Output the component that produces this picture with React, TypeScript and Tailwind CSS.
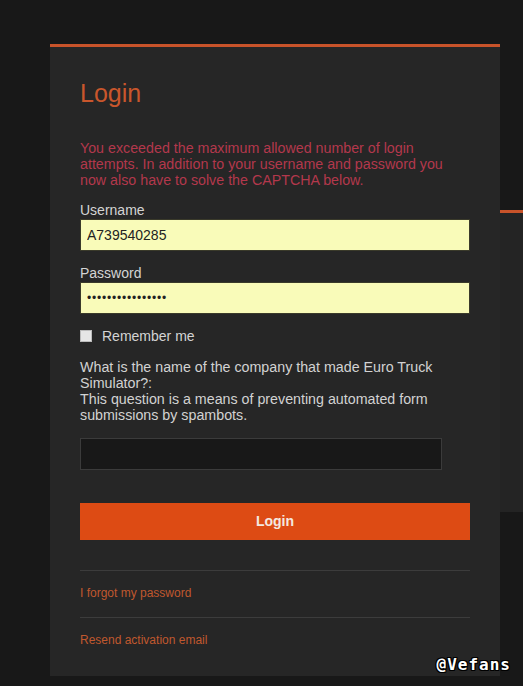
import { useState } from "react"

const font = { fontFamily: '"Liberation Sans", Arial, sans-serif' }

const App = () => {
	const [username, setUsername] = useState("A739540285")
	const [password, setPassword] = useState("abcdefghijklmnop")
	const [answer, setAnswer] = useState("")
	const [remember, setRemember] = useState(false)

	return (
		<div
			className="relative h-[686px] w-[523px] overflow-hidden bg-[#181818]"
			style={font}
		>
			<div className="flex pl-[50px] pt-[44px]">
				<div className="w-[450px] shrink-0 border-t-[3px] border-[#c8532a] bg-[#262626] px-[30px] pb-[28px]">
					<h1 className="pt-[32px] text-[25px] leading-[28px] text-[#c9562c]">
						Login
					</h1>
					<p className="mt-[33px] w-[372px] text-[14.25px] leading-[16px] text-[#b3384c]">
						You exceeded the maximum allowed number of login attempts. In
						addition to your username and password you now also have to solve
						the CAPTCHA below.
					</p>
					<label className="mt-[14px] block text-[14px] leading-[16px] text-[#d4d4d4]">
						Username
					</label>
					<input
						className="mt-[1px] block h-[32px] w-[390px] border border-[#3a3a2a] bg-[#f9fbb9] px-[6px] text-[14px] text-[#222] outline-none"
						value={username}
						onInput={(e) => setUsername(e.currentTarget.value)}
					/>
					<label className="mt-[14px] block text-[14px] leading-[16px] text-[#d4d4d4]">
						Password
					</label>
					<input
						type="password"
						className="mt-[1px] block h-[32px] w-[390px] border border-[#3a3a2a] bg-[#f9fbb9] px-[6px] text-[12px] tracking-[0.8px] text-[#222] outline-none"
						value={password}
						onInput={(e) => setPassword(e.currentTarget.value)}
					/>
					<label className="mt-[14px] flex items-center gap-[10px] text-[14px] leading-[16px] text-[#d4d4d4]">
						<input
							type="checkbox"
							className="h-[12px] w-[12px] appearance-none border border-[#bbb] bg-[#e6e6e6]"
							checked={remember}
							onChange={(e) => setRemember(e.currentTarget.checked)}
						/>
						Remember me
					</label>
					<p className="mt-[15px] text-[14.25px] leading-[16px] text-[#d2d2d2]">
						What is the name of the company that made Euro Truck Simulator?:
						<br />
						This question is a means of preventing automated form submissions
						by spambots.
					</p>
					<input
						className="mt-[15px] block h-[32px] w-[362px] border border-[#3b3b3b] bg-[#181818] px-[6px] text-[14px] text-[#ddd] outline-none"
						value={answer}
						onInput={(e) => setAnswer(e.currentTarget.value)}
					/>
					<button className="mt-[33px] block h-[37px] w-[390px] bg-[#dd4b14] text-[14px] font-bold text-[#f4e8e0]">
						Login
					</button>
					<div className="mt-[30px] border-t border-[#3c3c3c] pt-[15px] pb-[16px] text-[12px] leading-[15px] text-[#c0582e]">
						I forgot my password
					</div>
					<div className="border-t border-[#3c3c3c] pt-[15px] text-[12px] leading-[15px] text-[#c0582e]">
						Resend activation email
					</div>
				</div>
				<div className="mt-[166px] h-[302px] flex-1 border-t-[3px] border-[#c8532a] bg-[#242424]" />
			</div>
			<div
				className="absolute right-[12px] bottom-[13px] text-[16px] font-bold leading-[16px] tracking-[1px] text-white"
				style={{
					fontFamily: '"DejaVu Sans Mono", monospace',
					textShadow:
						"1px 0 #000, -1px 0 #000, 0 1px #000, 0 -1px #000, 1px 1px #000, -1px -1px #000, 1px -1px #000, -1px 1px #000",
				}}
			>
				@Vefans
			</div>
		</div>
	)
}

export default App
